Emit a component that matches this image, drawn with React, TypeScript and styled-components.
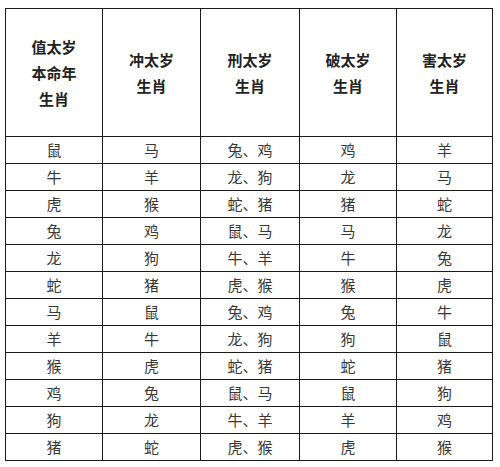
import styled, { createGlobalStyle } from "styled-components";

const rows: string[][] = [
  ["鼠", "马", "兔、鸡", "鸡", "羊"],
  ["牛", "羊", "龙、狗", "龙", "马"],
  ["虎", "猴", "蛇、猪", "猪", "蛇"],
  ["兔", "鸡", "鼠、马", "马", "龙"],
  ["龙", "狗", "牛、羊", "牛", "兔"],
  ["蛇", "猪", "虎、猴", "猴", "虎"],
  ["马", "鼠", "兔、鸡", "兔", "牛"],
  ["羊", "牛", "龙、狗", "狗", "鼠"],
  ["猴", "虎", "蛇、猪", "蛇", "猪"],
  ["鸡", "兔", "鼠、马", "鼠", "狗"],
  ["狗", "龙", "牛、羊", "羊", "鸡"],
  ["猪", "蛇", "虎、猴", "虎", "猴"],
];

const headers: string[][] = [
  ["值太岁", "本命年", "生肖"],
  ["冲太岁", "生肖"],
  ["刑太岁", "生肖"],
  ["破太岁", "生肖"],
  ["害太岁", "生肖"],
];

const widths = [97, 98, 99, 97, 96];

export default function App() {
  return (
    <>
      <GlobalStyle />
      <Page>
        <Table>
          <colgroup>
            {widths.map((w, i) => (
              <col key={i} style={{ width: w }} />
            ))}
          </colgroup>
          <thead>
            <tr>
              {headers.map((lines, i) => (
                <HeadCell key={i}>
                  {lines.map((l) => (
                    <HeadLine key={l}>{l}</HeadLine>
                  ))}
                </HeadCell>
              ))}
            </tr>
          </thead>
          <tbody>
            {rows.map((r, i) => (
              <tr key={i}>
                {r.map((c, j) => (
                  <Cell key={j}>{c}</Cell>
                ))}
              </tr>
            ))}
          </tbody>
        </Table>
      </Page>
    </>
  );
}

const GlobalStyle = createGlobalStyle`
  html, body {
    margin: 0;
    background: #fff;
  }
  body {
    font-family: "Noto Sans CJK SC", "Noto Sans", sans-serif;
    color: #2a2a2a;
  }
`;

const Page = styled.div`
  width: 500px;
  height: 467px;
  padding: 8px 0 0 5px;
  box-sizing: border-box;
`;

const Table = styled.table`
  border-collapse: collapse;
  table-layout: fixed;
  width: 487px;
`;

const HeadCell = styled.th`
  height: 127px;
  border: 1px solid #1a1a1a;
  padding: 0;
  text-align: center;
  vertical-align: middle;
  font-size: 15px;
  font-weight: 700;
  color: #222;
`;

const HeadLine = styled.div`
  line-height: 26px;
`;

const Cell = styled.td`
  height: 26px;
  border: 1px solid #1a1a1a;
  padding: 0;
  text-align: center;
  vertical-align: middle;
  font-size: 15px;
  line-height: 26px;
  color: #383838;
`;
